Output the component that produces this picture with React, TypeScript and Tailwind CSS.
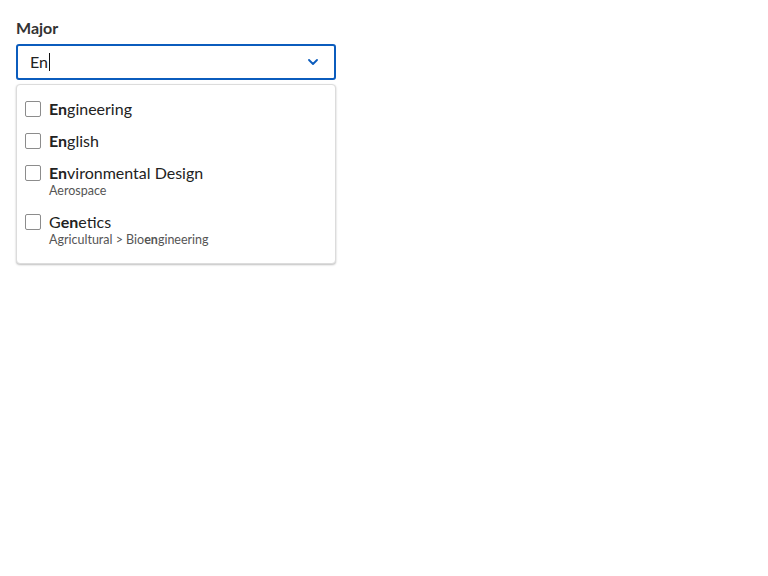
import React from "react";

type Part = { text: string; bold?: boolean };

const options: { label: Part[]; sub?: Part[] }[] = [
  { label: [{ text: "En", bold: true }, { text: "gineering" }] },
  { label: [{ text: "En", bold: true }, { text: "glish" }] },
  {
    label: [{ text: "En", bold: true }, { text: "vironmental Design" }],
    sub: [{ text: "Aerospace" }],
  },
  {
    label: [{ text: "G" }, { text: "en", bold: true }, { text: "etics" }],
    sub: [{ text: "Agricultural > Bio" }, { text: "en", bold: true }, { text: "gineering" }],
  },
];

const renderParts = (parts: Part[]) =>
  parts.map((p, i) =>
    p.bold ? (
      <span key={i} className="font-bold">
        {p.text}
      </span>
    ) : (
      <span key={i}>{p.text}</span>
    )
  );

const App = () => {
  return (
    <div
      className="min-h-screen bg-white px-4 pt-[17px] text-[#222]"
      style={{ fontFamily: "Lato, 'Noto Sans', sans-serif" }}
    >
      <div className="w-[320px]">
        <label className="block text-[16px] font-bold leading-[22px] text-[#333]">Major</label>

        {/* Combobox input */}
        <div className="mt-[5px] flex h-9 items-center rounded-[3px] border-2 border-[#0b5cbd] pl-3 pr-3">
          <div className="flex flex-1 items-center text-[16px] leading-6">
            En
            <span className="ml-[1px] inline-block h-[18px] w-px bg-[#111]" />
          </div>
          <svg width="10" height="6" viewBox="0 0 10 6" className="mr-[4px]">
            <path d="M1 1l4 4 4-4" fill="none" stroke="#0b5cbd" strokeWidth="1.8" strokeLinecap="round" strokeLinejoin="round" />
          </svg>
        </div>

        {/* Listbox */}
        <ul className="mt-1 rounded-[4px] border border-[#dcdcdc] bg-white py-2 shadow-[0_1px_2px_rgba(0,0,0,0.25)]">
          {options.map((o, i) => (
            <li key={i} className="flex gap-2 px-2 py-1">
              <span className="mt-1 h-4 w-4 shrink-0 rounded-[2px] border border-[#8c8c8c] bg-white" />
              <div className="flex flex-col">
                <span className="text-[16px] leading-6">{renderParts(o.label)}</span>
                {o.sub && (
                  <span className="-mt-[2px] mb-[3px] text-[12.5px] leading-4 text-[#555]">
                    {renderParts(o.sub)}
                  </span>
                )}
              </div>
            </li>
          ))}
        </ul>
      </div>
    </div>
  );
};

export default App;
